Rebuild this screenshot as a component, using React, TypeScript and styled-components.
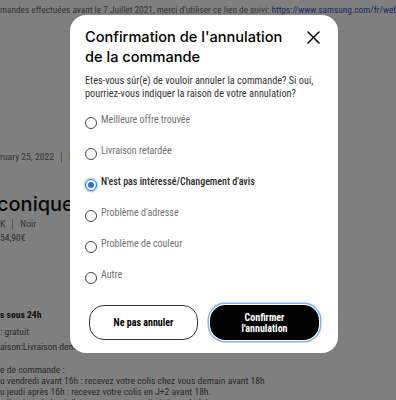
import React, { useState } from "react";
import styled, { createGlobalStyle, css } from "styled-components";

const GlobalStyle = createGlobalStyle`
  html, body { margin: 0; padding: 0; background: #fff; overflow: hidden; }
  body { font-family: "Roboto Condensed", Roboto, sans-serif; }
  * { box-sizing: border-box; }
`;

/* ---------- background page ---------- */
const Page = styled.div`
  width: 396px;
  height: 400px;
  overflow: hidden;
  display: flex;
  flex-direction: column;
  color: #555;
  font-family: "Roboto Condensed", Roboto, sans-serif;
  font-size: 9.6px;
  white-space: nowrap;
`;

const Notice = styled.div`
  margin-top: 4px;
  line-height: 12px;
  font-size: 9.3px;
  color: #6a6a6a;
`;

const Link = styled.a`
  color: #3450c8;
  text-decoration: none;
`;

const Divider = styled.div`
  margin-top: 124px;
  height: 1px;
  background: #e4e4e4;
`;

const Meta = styled.div<{ $top: number }>`
  margin-top: ${(p) => p.$top}px;
  display: flex;
  align-items: center;
  gap: 7px;
  line-height: 12px;
  color: #6a6a6a;
`;

const Sep = styled.span`
  display: inline-block;
  width: 1px;
  height: 11px;
  background: #aaa;
`;

const ProductName = styled.div`
  margin-top: 29px;
  font-family: Inter, sans-serif;
  font-size: 20px;
  font-weight: 500;
  line-height: 24px;
  color: #111;
  margin-left: -3px;
`;

const Line = styled.div<{ $top: number; $bold?: boolean; $dark?: boolean }>`
  margin-top: ${(p) => p.$top}px;
  line-height: 11px;
  color: ${(p) => (p.$dark ? "#222" : "#555")};
  font-weight: ${(p) => (p.$bold ? 700 : 400)};
`;

/* ---------- modal ---------- */
const Overlay = styled.div`
  position: fixed;
  inset: 0;
  background: rgba(0, 0, 0, 0.5);
  display: flex;
  align-items: flex-start;
  padding: 15px 0 0 70px;
`;

const Dialog = styled.div`
  width: 268px;
  background: #fff;
  border-radius: 16px;
  padding: 12px 15px 13px;
  display: flex;
  flex-direction: column;
`;

const Header = styled.div`
  display: flex;
  justify-content: space-between;
  align-items: flex-start;
`;

const Title = styled.h2`
  margin: 0;
  width: 210px;
  font-family: Inter, sans-serif;
  font-size: 14.6px;
  font-weight: 500;
  line-height: 20px;
  color: #000;
`;

const CloseButton = styled.button`
  border: 0;
  background: none;
  padding: 0;
  margin: 3px 3px 0 0;
  width: 14px;
  height: 14px;
  display: flex;
  align-items: center;
  justify-content: center;
  cursor: pointer;
  color: #000;
`;

const Question = styled.p`
  margin: 6.5px 0 0;
  font-family: "Roboto Condensed", Roboto, sans-serif;
  font-size: 10.25px;
  line-height: 13px;
  color: #333;
`;

const Options = styled.div`
  margin-top: 13.5px;
  display: flex;
  flex-direction: column;
  gap: 18px;
`;

const Option = styled.label`
  display: flex;
  align-items: flex-start;
  height: 13px;
  gap: 4px;
  cursor: pointer;
`;

const RadioDot = styled.span<{ $checked: boolean }>`
  flex: none;
  width: 12px;
  height: 12px;
  margin-top: 3.5px;
  border-radius: 50%;
  border: 1px solid #444;
  background: #fff;
  display: flex;
  align-items: center;
  justify-content: center;
  ${(p) =>
    p.$checked &&
    css`
      border: 1.5px solid #1f74e6;
      box-shadow: 0 0 0 1.5px #c9defa;
      &::after {
        content: "";
        width: 6px;
        height: 6px;
        border-radius: 50%;
        background: #1f74e6;
      }
    `}
`;

const OptionLabel = styled.span<{ $checked: boolean }>`
  font-family: "Roboto Condensed", Roboto, sans-serif;
  font-size: 10px;
  line-height: 13px;
  color: ${(p) => (p.$checked ? "#2a2a2a" : "#707070")};
  font-weight: ${(p) => (p.$checked ? 500 : 400)};
`;

const Actions = styled.div`
  margin-top: 24px;
  padding: 0 4px;
  display: flex;
  gap: 12px;
`;

const ActionButton = styled.button<{ $primary?: boolean }>`
  flex: 1;
  height: 35px;
  border-radius: 15px;
  font-family: "Roboto Condensed", Roboto, sans-serif;
  font-size: 10px;
  font-weight: 700;
  line-height: 11px;
  cursor: pointer;
  padding: 0 12px;
  ${(p) =>
    p.$primary
      ? css`
          background: #000;
          color: #fff;
          border: 1px solid #000;
          box-shadow: 0 0 0 1px #fff, 0 0 0 2.5px #7db4f4;
        `
      : css`
          background: #fff;
          color: #000;
          border: 1px solid #333;
        `}
`;

const reasons = [
  "Meilleure offre trouvée",
  "Livraison retardée",
  "N'est pas intéressé/Changement d'avis",
  "Problème d'adresse",
  "Problème de couleur",
  "Autre",
];

export default function App() {
  const [selected, setSelected] = useState(2);
  return (
    <>
      <GlobalStyle />
      <Page>
        <Notice>
          mandes effectuées avant le 7 Juillet 2021, merci d'utiliser ce lien de suivi:{" "}
          <Link href="#">https://www.samsung.com/fr/web/</Link>
        </Notice>
        <Divider />
        <Meta $top={11}>
          <span>ruary 25, 2022</span>
          <Sep />
          <span>Nom</span>
        </Meta>
        <ProductName>conique Ko</ProductName>
        <Meta $top={2}>
          <span>K</span>
          <Sep />
          <span>Noir</span>
        </Meta>
        <Line $top={2}>54,90€</Line>
        <Line $top={66} $bold $dark>s sous 24h</Line>
        <Line $top={6}>: gratuit</Line>
        <Line $top={4}>aison:Livraison demain</Line>
        <Line $top={12}>e de commande :</Line>
        <Line $top={0}>u vendredi avant 16h : recevez votre colis chez vous demain avant 18h</Line>
        <Line $top={0}>u jeudi après 16h : recevez votre colis en J+2 avant 18h.</Line>
        <Line $top={0}>u livraison à domicile : recevez votre colis le jour choisi.</Line>
      </Page>
      <Overlay>
        <Dialog role="dialog" aria-modal="true">
          <Header>
            <Title>Confirmation de l'annulation de la commande</Title>
            <CloseButton aria-label="Fermer">
              <svg width="13" height="13" viewBox="0 0 13 13">
                <path d="M1 1L12 12M12 1L1 12" stroke="#000" strokeWidth="1.5" strokeLinecap="round" />
              </svg>
            </CloseButton>
          </Header>
          <Question>
            Etes-vous sûr(e) de vouloir annuler la commande? Si oui, pourriez-vous indiquer la raison de votre
            annulation?
          </Question>
          <Options>
            {reasons.map((r, i) => (
              <Option key={r} onClick={() => setSelected(i)}>
                <RadioDot $checked={selected === i} />
                <OptionLabel $checked={selected === i}>{r}</OptionLabel>
              </Option>
            ))}
          </Options>
          <Actions>
            <ActionButton>Ne pas annuler</ActionButton>
            <ActionButton $primary>
              Confirmer
              <br />
              l'annulation
            </ActionButton>
          </Actions>
        </Dialog>
      </Overlay>
    </>
  );
}
